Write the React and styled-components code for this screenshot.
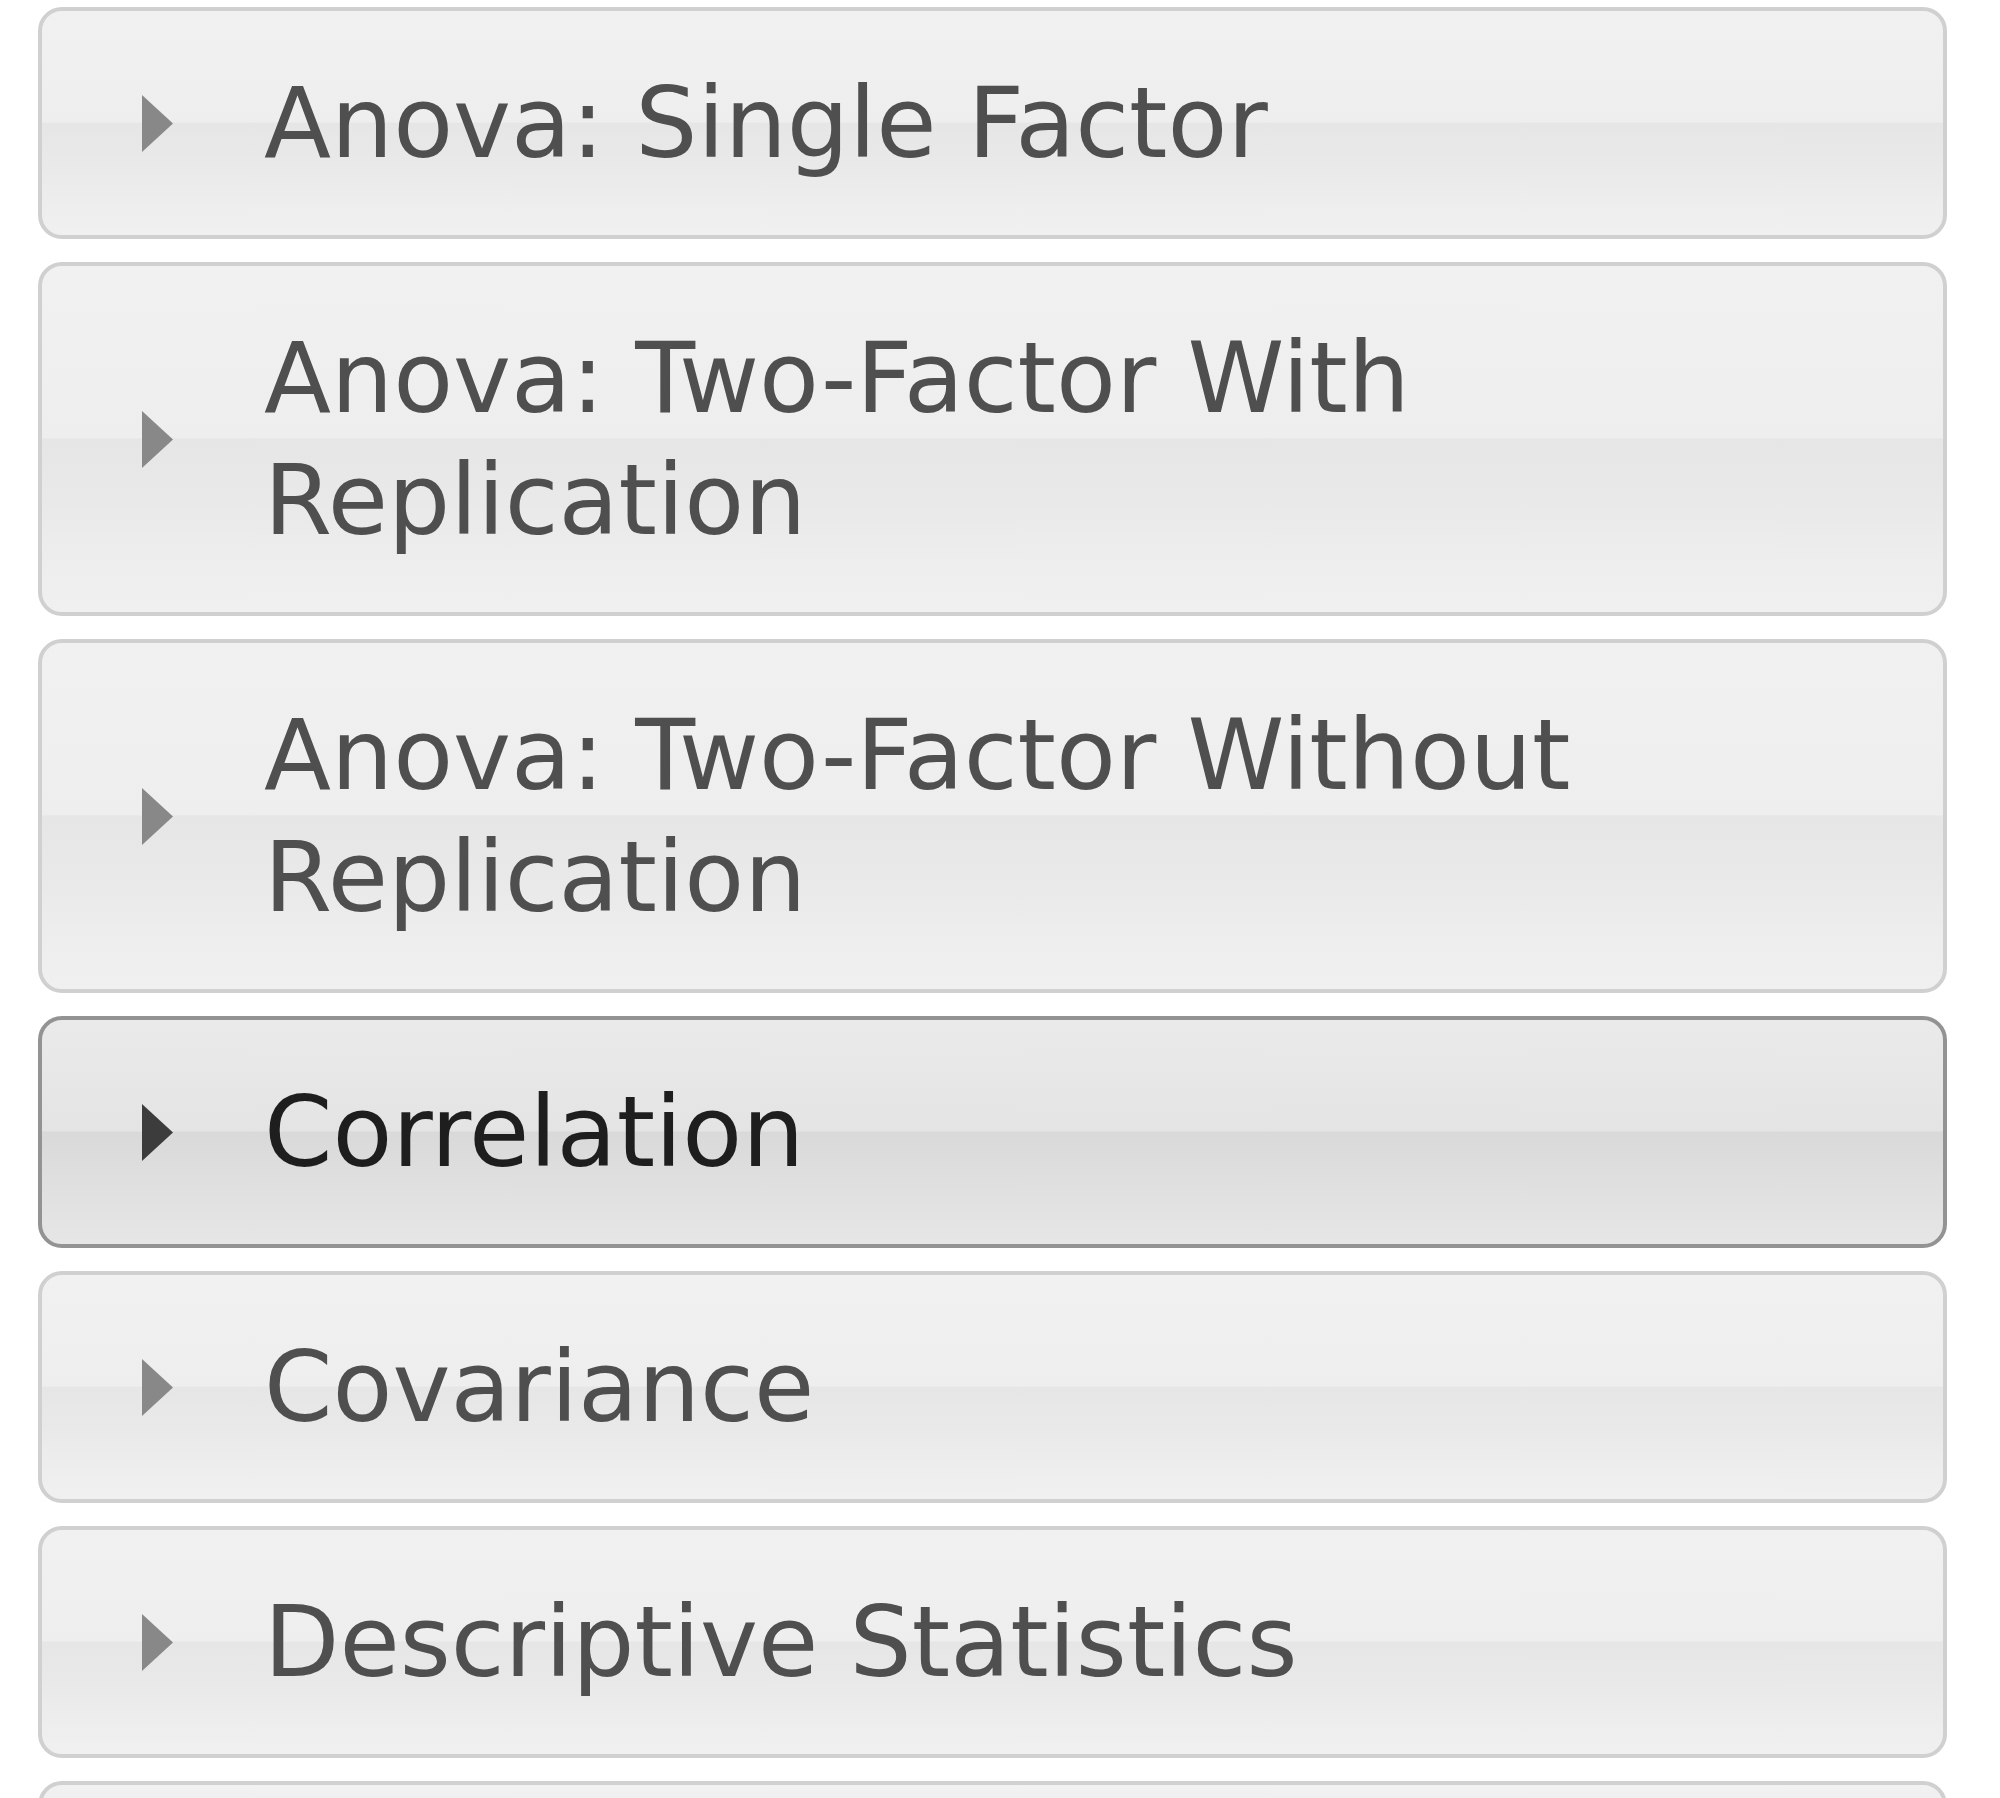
import React, { useState } from "react";
import styled, { createGlobalStyle, css } from "styled-components";

const GlobalStyle = createGlobalStyle`
  html, body {
    margin: 0;
    padding: 0;
    background: #ffffff;
  }
  body {
    font-family: "DejaVu Sans", Verdana, "Liberation Sans", sans-serif;
  }
`;

const Page = styled.div`
  height: 1798px;
  overflow: hidden;
  padding: 7px 0 0 38px;
  box-sizing: border-box;
`;

const Accordion = styled.div`
  width: 1909px;
  display: flex;
  flex-direction: column;
  gap: 23px;
`;

const defaultBg = css`
  background: linear-gradient(
    to bottom,
    #f1f1f1 0%,
    #eeeeee 49.6%,
    #e6e6e6 50%,
    #e9e9e9 68%,
    #eeeeee 88%,
    #f0f0f0 100%
  );
`;

const hoverBg = css`
  background: linear-gradient(
    to bottom,
    #eaeaea 0%,
    #e4e4e4 49.6%,
    #d9d9d9 50%,
    #dedede 68%,
    #e3e3e3 88%,
    #e6e6e6 100%
  );
`;

const Header = styled.div`
  display: flex;
  align-items: center;
  box-sizing: border-box;
  padding: 51px 60px 51px 100px;
  border: 4px solid ${(p) => (p.$active ? "#939393" : "#d0d0d0")};
  border-radius: 24px;
  ${(p) => (p.$active ? hoverBg : defaultBg)};
  color: ${(p) => (p.$active ? "#1e1e1e" : "#4f4f4f")};
  cursor: pointer;
`;

const Arrow = styled.svg`
  flex: 0 0 31px;
  width: 31px;
  height: 57px;
  margin-right: 91px;
  fill: ${(p) => (p.$active ? "#3c3c3c" : "#888888")};
`;

const Title = styled.span`
  font-family: "DejaVu Sans", Verdana, sans-serif;
  font-size: 98px;
  line-height: 122px;
`;

const items = [
  "Anova: Single Factor",
  "Anova: Two-Factor With Replication",
  "Anova: Two-Factor Without Replication",
  "Correlation",
  "Covariance",
  "Descriptive Statistics",
  "Exponential Smoothing",
  "F-Test Two-Sample for Variances",
];

export default function App() {
  const [hover] = useState(3);
  return (
    <>
      <GlobalStyle />
      <Page>
        <Accordion>
          {items.map((label, i) => (
            <Header key={label} $active={i === hover}>
              <Arrow viewBox="0 0 31 57" $active={i === hover}>
                <polygon points="0,0 31,28.5 0,57" />
              </Arrow>
              <Title>{label}</Title>
            </Header>
          ))}
        </Accordion>
      </Page>
    </>
  );
}
